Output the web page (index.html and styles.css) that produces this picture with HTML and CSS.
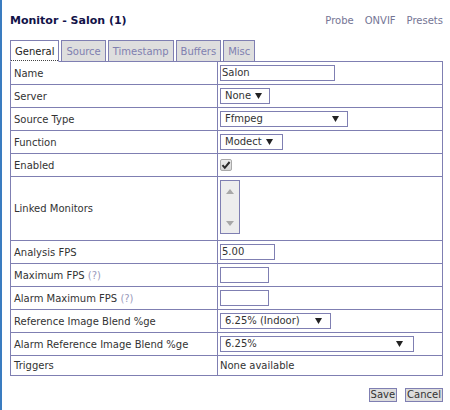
FILE: index.html
```html
<!DOCTYPE html>
<html>
<head>
<meta charset="utf-8">
<title>Monitor - Salon (1)</title>
<link rel="stylesheet" href="styles.css">
</head>
<body>
<div class="page">
  <div class="header">
    <h1 class="title">Monitor - Salon (1)</h1>
    <div class="links">
      <a class="hlink">Probe</a>
      <a class="hlink">ONVIF</a>
      <a class="hlink">Presets</a>
    </div>
  </div>
  <div class="tabs">
    <div class="tab active"><span class="tab-label">General</span></div>
    <div class="tab"><span class="tab-label">Source</span></div>
    <div class="tab"><span class="tab-label">Timestamp</span></div>
    <div class="tab"><span class="tab-label">Buffers</span></div>
    <div class="tab"><span class="tab-label">Misc</span></div>
  </div>
  <table class="form">
    <tr>
      <td class="label">Name</td>
      <td class="value"><span class="input w-name">Salon</span></td>
    </tr>
    <tr>
      <td class="label">Server</td>
      <td class="value"><span class="select w-server"><span>None</span><svg class="arrow" width="7" height="6" viewBox="0 0 7 6"><path d="M0 0H7L3.5 6Z" fill="#222"/></svg></span></td>
    </tr>
    <tr>
      <td class="label">Source Type</td>
      <td class="value"><span class="select w-source"><span>Ffmpeg</span><svg class="arrow" width="7" height="6" viewBox="0 0 7 6"><path d="M0 0H7L3.5 6Z" fill="#222"/></svg></span></td>
    </tr>
    <tr>
      <td class="label">Function</td>
      <td class="value"><span class="select w-function"><span>Modect</span><svg class="arrow" width="7" height="6" viewBox="0 0 7 6"><path d="M0 0H7L3.5 6Z" fill="#222"/></svg></span></td>
    </tr>
    <tr>
      <td class="label">Enabled</td>
      <td class="value"><span class="checkbox"><svg width="10" height="10" viewBox="0 0 10 10"><path d="M1.5 5.2L3.8 7.8L8.6 2" stroke="#2a2a2a" stroke-width="2" fill="none"/></svg></span></td>
    </tr>
    <tr>
      <td class="label">Linked Monitors</td>
      <td class="value"><span class="listbox"><svg width="8" height="5" viewBox="0 0 8 5"><path d="M0 5H8L4 0Z" fill="#a8a8a8"/></svg><svg width="8" height="5" viewBox="0 0 8 5"><path d="M0 0H8L4 5Z" fill="#a8a8a8"/></svg></span></td>
    </tr>
    <tr>
      <td class="label">Analysis FPS</td>
      <td class="value"><span class="input w-analysis">5.00</span></td>
    </tr>
    <tr>
      <td class="label">Maximum FPS <span class="help">(?)</span></td>
      <td class="value"><span class="input w-fps"></span></td>
    </tr>
    <tr>
      <td class="label">Alarm Maximum FPS <span class="help">(?)</span></td>
      <td class="value"><span class="input w-fps"></span></td>
    </tr>
    <tr>
      <td class="label">Reference Image Blend %ge</td>
      <td class="value"><span class="select w-blend"><span>6.25% (Indoor)</span><svg class="arrow" width="7" height="6" viewBox="0 0 7 6"><path d="M0 0H7L3.5 6Z" fill="#222"/></svg></span></td>
    </tr>
    <tr>
      <td class="label">Alarm Reference Image Blend %ge</td>
      <td class="value"><span class="select w-alarmblend"><span>6.25%</span><svg class="arrow" width="7" height="6" viewBox="0 0 7 6"><path d="M0 0H7L3.5 6Z" fill="#222"/></svg></span></td>
    </tr>
    <tr>
      <td class="label">Triggers</td>
      <td class="value text">None available</td>
    </tr>
  </table>
  <div class="actions">
    <button class="btn">Save</button>
    <button class="btn">Cancel</button>
  </div>
</div>
</body>
</html>
```

FILE: styles.css
```css
html, body {
  margin: 0;
  padding: 0;
  background: #ffffff;
}
body {
  font-family: "DejaVu Sans", Verdana, sans-serif;
  font-size: 10px;
  color: #333333;
  height: 410px;
  box-sizing: border-box;
  border-left: 2px solid #3a7cc0;
}
.page {
  padding: 14px 7px 0 8px;
}
.header {
  display: flex;
  justify-content: space-between;
  align-items: baseline;
  height: 26px;
}
.title {
  margin: 0;
  font-size: 11px;
  font-weight: bold;
  line-height: 14px;
  color: #121248;
}
.links {
  display: flex;
  gap: 11px;
}
.hlink {
  color: #757595;
  line-height: 14px;
}
.tabs {
  display: flex;
  gap: 2px;
  margin-bottom: -1px;
}
.tab {
  position: relative;
  height: 22px;
  box-sizing: border-box;
  border: 1px solid #7f7fb2;
  background: #dedede;
  color: #8080b0;
  padding: 0 4px;
  display: flex;
  align-items: center;
}
.tab.active {
  background: #ffffff;
  color: #222222;
  border-bottom-color: #ffffff;
  z-index: 1;
  padding: 0;
  align-items: stretch;
}
.tab.active .tab-label {
  display: flex;
  align-items: center;
  padding: 1px 4px 0 4px;
  border-bottom: 1px dotted #444;
}
.form {
  width: 433px;
  border-collapse: collapse;
}
.form td {
  border: 1px solid #7f7fb2;
  padding: 3px;
  line-height: 13px;
  vertical-align: middle;
}
.form td.label {
  width: 200px;
}
.form td.value {
  padding: 3px 2px;
}
.form td.text {
  padding-left: 2px;
}
.help {
  color: #9a9abb;
}
.input, .select {
  display: flex;
  box-sizing: border-box;
  height: 16px;
  border: 1px solid #7f7fb2;
  background: #ffffff;
  color: #333333;
  line-height: 14px;
}
.input {
  padding-left: 1px;
}
.select {
  align-items: center;
  justify-content: space-between;
  padding: 0 7px 0 4px;
}
.arrow {
  display: block;
}
.w-name { width: 115px; }
.w-server { width: 50px; }
.w-source { width: 128px; padding-right: 8px; }
.w-function { width: 63px; padding-right: 9px; }
.w-analysis { width: 55px; }
.w-fps { width: 49px; }
.w-blend { width: 111px; padding-right: 8px; }
.w-alarmblend { width: 194px; padding-right: 10px; }
.checkbox {
  display: flex;
  align-items: center;
  justify-content: center;
  box-sizing: border-box;
  width: 12px;
  height: 12px;
  margin: 2px 0;
  border: 1px solid #a9a9a9;
  border-radius: 2px;
  background: linear-gradient(#ececec, #d6d6d6);
}
.listbox {
  display: flex;
  flex-direction: column;
  justify-content: space-between;
  align-items: center;
  box-sizing: border-box;
  width: 20px;
  height: 54px;
  margin-bottom: 3px;
  padding: 8px 0 7px;
  border: 1px solid #7f7fb2;
  background: #ededed;
}
.actions {
  display: flex;
  justify-content: flex-end;
  gap: 8px;
  margin-top: 12px;
}
.btn {
  font-family: "DejaVu Sans", Verdana, sans-serif;
  font-size: 10px;
  color: #333333;
  height: 14px;
  line-height: 12px;
  padding: 0 1px;
  margin: 0;
  border: 1px solid #7f7fb2;
  background: #dcdcdc;
  border-radius: 0;
}
```
